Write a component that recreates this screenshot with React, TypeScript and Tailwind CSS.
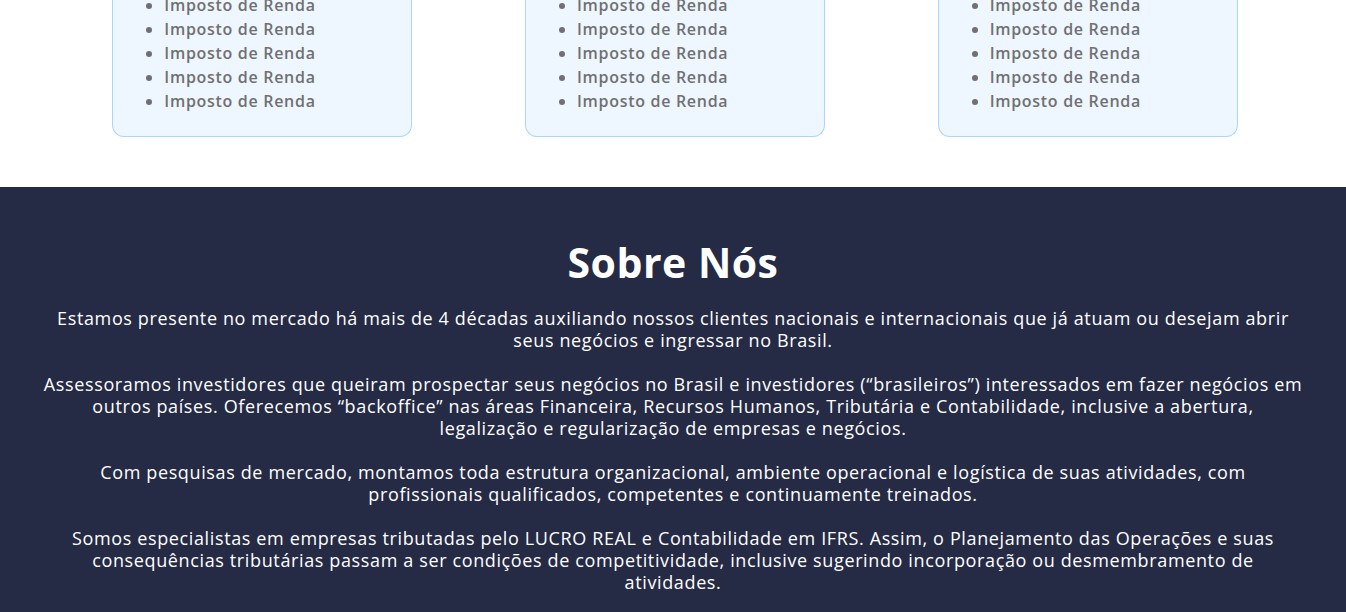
import React from 'react'

const items = ['Imposto de Renda', 'Imposto de Renda', 'Imposto de Renda', 'Imposto de Renda', 'Imposto de Renda']

function ServiceCard() {
  return (
    <div className="w-[300px] rounded-b-xl border border-t-0 border-[#a9d6fb] bg-[#eef6ff] px-6 pb-[23px]">
      <ul className="list-disc pl-[27px] text-[16px] font-semibold leading-6 tracking-[0.7px] text-[#707070] marker:text-[#707070]">
        {items.map((t, i) => (
          <li key={i}>{t}</li>
        ))}
      </ul>
    </div>
  )
}

const paragraphs: string[][] = [
  [
    'Estamos presente no mercado há mais de 4 décadas auxiliando nossos clientes nacionais e internacionais que já atuam ou desejam abrir',
    'seus negócios e ingressar no Brasil.',
  ],
  [
    'Assessoramos investidores que queiram prospectar seus negócios no Brasil e investidores (“brasileiros”) interessados em fazer negócios em',
    'outros países. Oferecemos “backoffice” nas áreas Financeira, Recursos Humanos, Tributária e Contabilidade, inclusive a abertura,',
    'legalização e regularização de empresas e negócios.',
  ],
  [
    'Com pesquisas de mercado, montamos toda estrutura organizacional, ambiente operacional e logística de suas atividades, com',
    'profissionais qualificados, competentes e continuamente treinados.',
  ],
  [
    'Somos especialistas em empresas tributadas pelo LUCRO REAL e Contabilidade em IFRS. Assim, o Planejamento das Operações e suas',
    'consequências tributárias passam a ser condições de competitividade, inclusive sugerindo incorporação ou desmembramento de',
    'atividades.',
  ],
]

export default function App() {
  return (
    <div className="min-h-[612px] overflow-hidden bg-white" style={{ fontFamily: '"Open Sans", "DejaVu Sans", sans-serif' }}>
      <section className="h-[187px] overflow-hidden">
        <div className="-mt-[7px] grid grid-cols-3 pl-[56px] pr-[52px]">
          <div className="flex justify-center">
            <ServiceCard />
          </div>
          <div className="flex justify-center">
            <ServiceCard />
          </div>
          <div className="flex justify-center">
            <ServiceCard />
          </div>
        </div>
      </section>

      <section className="bg-[#252a45] px-10 pt-[52px] pb-10 text-center text-white">
        <h2 className="text-[41px] font-bold leading-[46px] tracking-[0.5px]">Sobre Nós</h2>
        <div className="mt-[22px] flex flex-col gap-[22px] text-[18px] leading-[22px] tracking-[0.63px]">
          {paragraphs.map((lines, i) => (
            <p key={i} className="whitespace-nowrap">
              {lines.map((l, j) => (
                <React.Fragment key={j}>
                  {l}
                  {j < lines.length - 1 && <br />}
                </React.Fragment>
              ))}
            </p>
          ))}
        </div>
      </section>
    </div>
  )
}
